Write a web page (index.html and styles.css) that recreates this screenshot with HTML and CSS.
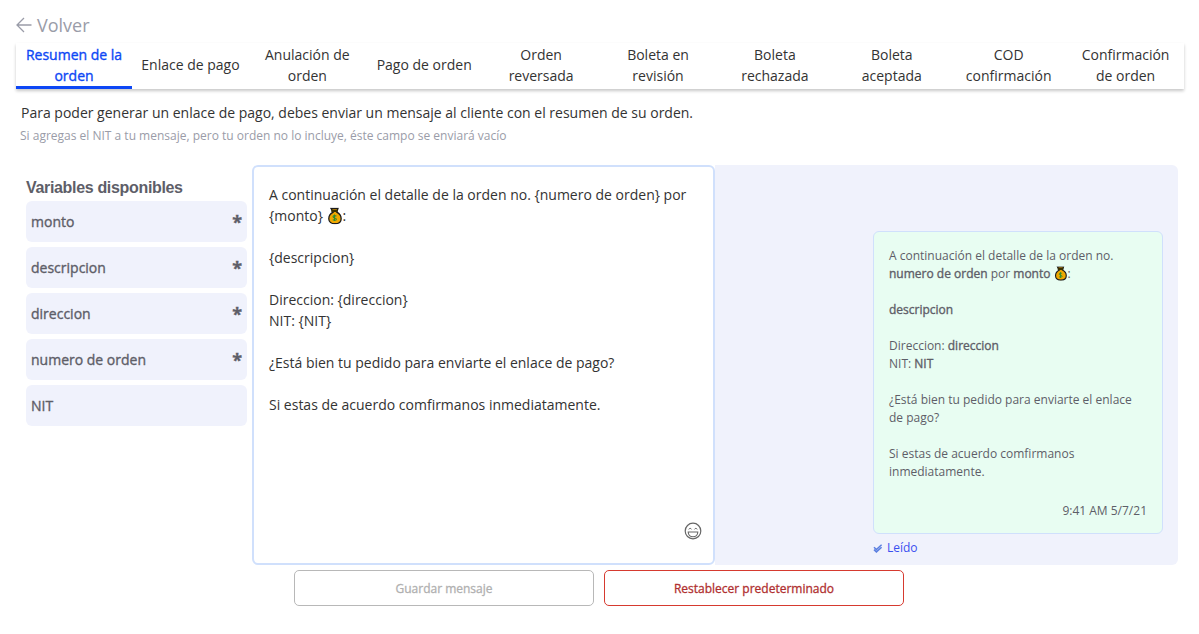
FILE: index.html
```html
<!DOCTYPE html>
<html lang="es">
<head>
  <meta charset="UTF-8">
  <meta name="viewport" content="width=device-width, initial-scale=1.0">
  <title>Mensajes</title>
  <link rel="stylesheet" href="styles.css">
</head>
<body>
  <a class="back" href="#">
    <svg class="back-icon" width="16" height="16" viewBox="0 0 16 16"><path d="M15.500 8H1M8 1L1 8l7 7" fill="none" stroke="#9a9ca8" stroke-width="1.300"/></svg>
    <span>Volver</span>
  </a>

  <div class="tabs">
    <div class="tab active">Resumen de la orden</div>
    <div class="tab">Enlace de pago</div>
    <div class="tab">Anulación de orden</div>
    <div class="tab">Pago de orden</div>
    <div class="tab">Orden reversada</div>
    <div class="tab">Boleta en revisión</div>
    <div class="tab">Boleta rechazada</div>
    <div class="tab">Boleta aceptada</div>
    <div class="tab">COD confirmación</div>
    <div class="tab">Confirmación de orden</div>
  </div>

  <p class="intro">Para poder generar un enlace de pago, debes enviar un mensaje al cliente con el resumen de su orden.</p>
  <p class="hint">Si agregas el NIT a tu mensaje, pero tu orden no lo incluye, éste campo se enviará vacío</p>

  <div class="editor-row">
    <div class="variables">
      <h3>Variables disponibles</h3>
      <div class="variable"><span>monto</span><span class="required">*</span></div>
      <div class="variable"><span>descripcion</span><span class="required">*</span></div>
      <div class="variable"><span>direccion</span><span class="required">*</span></div>
      <div class="variable"><span>numero de orden</span><span class="required">*</span></div>
      <div class="variable"><span>NIT</span></div>
    </div>

    <div class="editor">
      <p>A continuación el detalle de la orden no. {numero de orden} por {monto} <svg class="bag bag-lg" viewBox="0 0 16 18"><use href="#money-bag"/></svg>:</p>
      <p>&nbsp;</p>
      <p>{descripcion}</p>
      <p>&nbsp;</p>
      <p>Direccion: {direccion}</p>
      <p>NIT: {NIT}</p>
      <p>&nbsp;</p>
      <p>¿Está bien tu pedido para enviarte el enlace de pago?</p>
      <p>&nbsp;</p>
      <p>Si estas de acuerdo comfirmanos inmediatamente.</p>
      <svg class="emoji-btn" width="18" height="18" viewBox="0 0 18 18">
        <circle cx="9" cy="9" r="7.800" fill="none" stroke="#666" stroke-width="1.200"/>
        <path d="M4.200 10h9.600c0 3-2.200 4.800-4.800 4.800S4.200 13 4.200 10z" fill="none" stroke="#666" stroke-width="1.100"/>
        <path d="M4.800 7.400c.5-1.400 2.200-1.400 2.700 0M10.500 7.400c.5-1.400 2.200-1.400 2.700 0" fill="none" stroke="#666" stroke-width="1"/>
      </svg>
    </div>

    <div class="preview">
      <div class="bubble">
        <p>A continuación el detalle de la orden no. <b>numero de orden</b> por <b>monto</b> <svg class="bag" viewBox="0 0 16 18"><use href="#money-bag"/></svg>:</p>
        <p>&nbsp;</p>
        <p><b>descripcion</b></p>
        <p>&nbsp;</p>
        <p>Direccion: <b>direccion</b></p>
        <p>NIT: <b>NIT</b></p>
        <p>&nbsp;</p>
        <p>¿Está bien tu pedido para enviarte el enlace de pago?</p>
        <p>&nbsp;</p>
        <p>Si estas de acuerdo comfirmanos inmediatamente.</p>
        <div class="time">9:41 AM 5/7/21</div>
      </div>
      <div class="read">
        <svg width="10" height="9" viewBox="0 0 10 9"><path d="M1 3.200l2.400 2.300L8.600 .8M1 5.600l2.400 2.300L8.600 3.200" fill="none" stroke="#5b7fe0" stroke-width="1.500"/></svg>
        <span>Leído</span>
      </div>
    </div>
  </div>

  <div class="actions">
    <button class="btn btn-disabled">Guardar mensaje</button>
    <button class="btn btn-danger">Restablecer predeterminado</button>
  </div>

  <svg width="0" height="0" class="defs">
    <symbol id="money-bag" viewBox="0 0 16 18">
      <path d="M4.300 1h7.400l-1.300 3.800c2.600 1.300 4.700 4 4.700 7 0 3.500-2.800 5.400-6.600 5.400s-6.600-1.900-6.600-5.400c0-3 2.100-5.700 4.700-7z" fill="#f0a800" stroke="#1c1c1c" stroke-width="1.400"/>
      <path d="M4.600 2.200h6.800v2.400H4.600z" fill="#3a3000"/>
      <path d="M10 9.200c-.6-.8-3.600-1-3.600.6 0 1.700 3.600.9 3.600 2.600 0 1.500-3 1.400-3.800.5M8 7.400v7" fill="none" stroke="#2e8b2e" stroke-width="1.100"/>
    </symbol>
  </svg>
</body>
</html>
```

FILE: styles.css
```css
body {
  font-family: 'Open Sans', sans-serif;
  margin: 0;
  padding: 15px 15px 0 16px;
  background: #fff;
  color: #333;
}

p {
  margin: 0;
}

.defs {
  display: block;
  height: 0;
}

.back {
  display: flex;
  align-items: center;
  gap: 5px;
  height: 20px;
  color: #9a9ca8;
  font-size: 18px;
  text-decoration: none;
}

.tabs {
  display: flex;
  width: 1168px;
  margin-top: 8px;
  box-shadow: 0 2px 3px rgba(0, 0, 0, 0.22);
}

.tab {
  flex: 1;
  height: 46px;
  box-sizing: border-box;
  padding: 0 8px 3px;
  display: flex;
  align-items: center;
  justify-content: center;
  text-align: center;
  font-size: 14px;
  line-height: 21px;
  color: #333;
}

.tab.active {
  flex: 0 0 116px;
  color: #0d47f5;
  -webkit-text-stroke: 0.35px #0d47f5;
  border-bottom: 3px solid #0d47f5;
  padding-bottom: 0;
}

.intro {
  margin: 14px 0 0 5px;
  font-size: 14px;
  line-height: 20px;
  color: #333;
}

.hint {
  margin: 5px 0 0 4px;
  font-size: 12px;
  line-height: 16px;
  color: #9a9ca8;
}

.editor-row {
  display: flex;
  margin: 21px 6px 0 0;
  height: 400px;
}

.variables {
  width: 221px;
  margin: 0 5px 0 10px;
  flex-shrink: 0;
}

.variables h3 {
  margin: 14px 0 4px;
  font-family: 'Liberation Sans', sans-serif;
  font-size: 16px;
  letter-spacing: -0.33px;
  line-height: 18px;
  font-weight: 700;
  color: #5e5e68;
}

.variable {
  display: flex;
  justify-content: space-between;
  align-items: center;
  height: 41px;
  box-sizing: border-box;
  margin-bottom: 5px;
  padding: 0 5px;
  background: #f0f2fc;
  border-radius: 6px;
  font-size: 14px;
  color: #5e5e68;
  -webkit-text-stroke: 0.35px #5e5e68;
}

.required {
  font-size: 18px;
  line-height: 18px;
  font-weight: 700;
}

.editor {
  position: relative;
  width: 463px;
  box-sizing: border-box;
  padding: 17px 15px;
  border: 2px solid #d0e0fc;
  border-radius: 6px;
  font-size: 14px;
  line-height: 21px;
  color: #333;
}

.emoji-btn {
  position: absolute;
  right: 11px;
  bottom: 23px;
}

.bag {
  width: 13px;
  height: 15px;
  margin-right: 1px;
  vertical-align: -3px;
}

.bag-lg {
  width: 15px;
  height: 18px;
  vertical-align: -4px;
}

.preview {
  flex: 1;
  display: flex;
  flex-direction: column;
  align-items: flex-end;
  box-sizing: border-box;
  padding: 66px 15px 0;
  background: #f0f2fc;
  border-radius: 0 6px 6px 0;
}

.bubble {
  width: 290px;
  height: 303px;
  box-sizing: border-box;
  padding: 15px;
  background: #e8fdf2;
  border: 1px solid #d0e0fc;
  border-radius: 6px;
  font-size: 12px;
  line-height: 18px;
  color: #5e5e68;
}

.bubble b {
  font-weight: 400;
  -webkit-text-stroke: 0.35px #5e5e68;
}

.time {
  margin-top: 21px;
  text-align: right;
}

.read {
  width: 290px;
  display: flex;
  align-items: center;
  gap: 4px;
  margin-top: 5px;
  font-size: 12px;
  line-height: 18px;
  color: #3a50f0;
}

.actions {
  display: flex;
  gap: 10px;
  margin: 5px 0 0 278px;
}

.btn {
  width: 300px;
  height: 36px;
  background: #fff;
  border-radius: 5px;
  font-family: 'Open Sans', sans-serif;
  font-size: 12px;
  -webkit-text-stroke: 0.3px currentColor;
}

.btn-disabled {
  border: 1px solid #b8b8b8;
  color: #b0b0b0;
}

.btn-danger {
  border: 1px solid #d63a2f;
  color: #b03030;
}
```
